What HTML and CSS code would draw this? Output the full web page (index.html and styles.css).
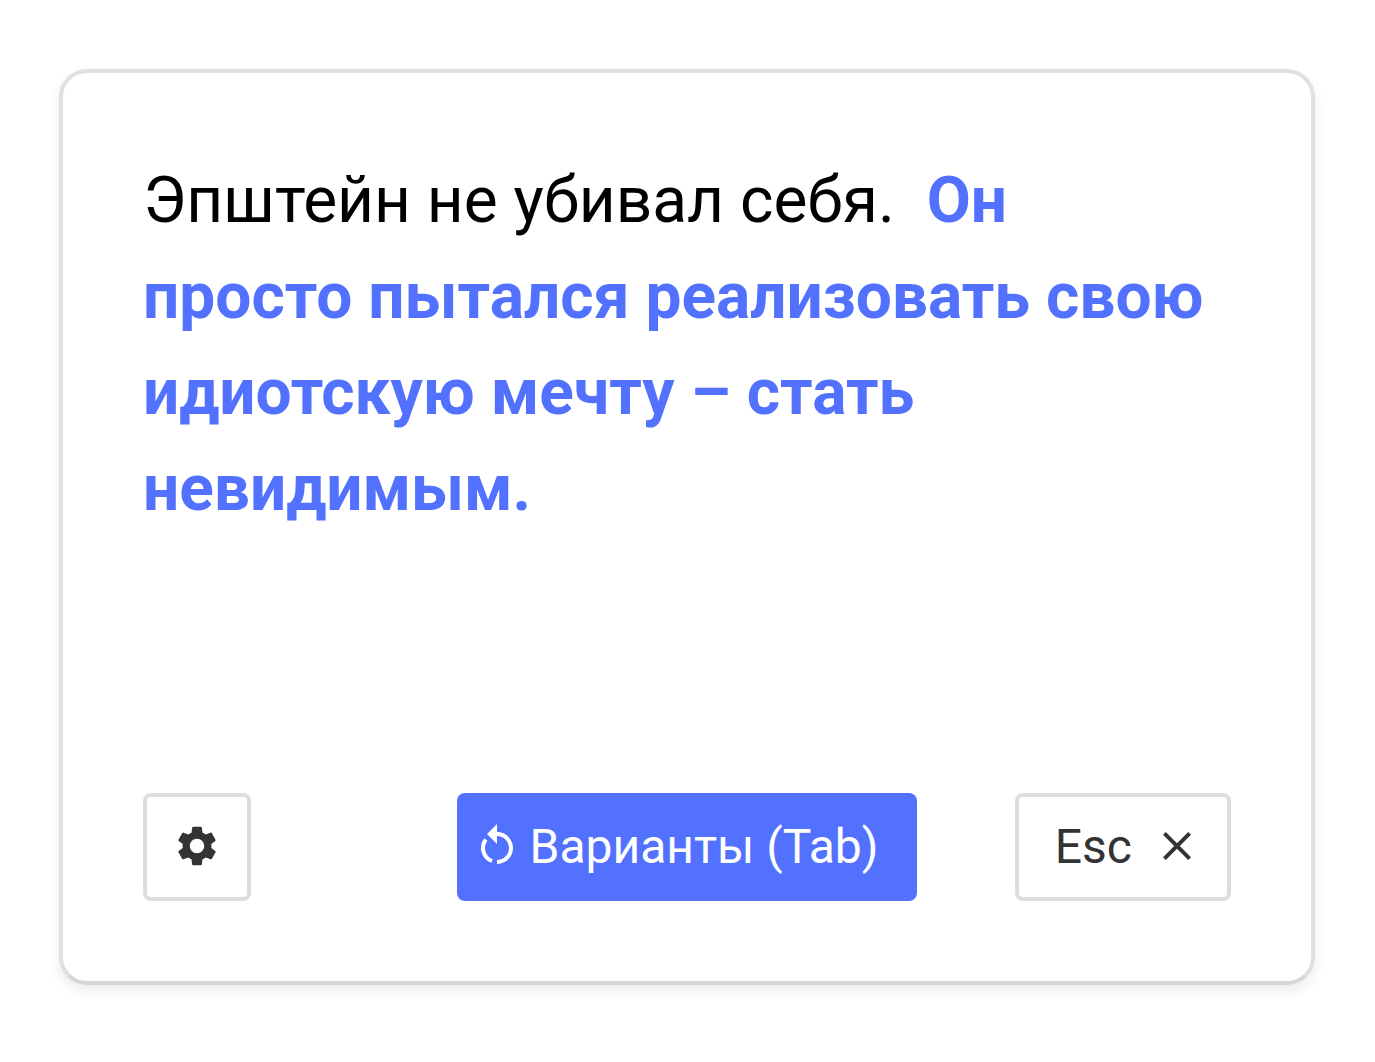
FILE: index.html
```html
<!DOCTYPE html>
<html lang="ru">
<head>
  <meta charset="UTF-8">
  <title>Эпштейн не убивал себя</title>
  <link rel="stylesheet" href="styles.css">
</head>
<body>
  <div class="card">
    <p class="phrase">Эпштейн не убивал себя. <b class="answer">Он просто пытался реализовать свою идиотскую мечту – стать невидимым.</b></p>

    <div class="actions">
      <div class="actions-left">
        <button class="button icon-button" aria-label="Настройки">
          <svg class="icon" viewBox="0 0 24 24"><path d="M19.14 12.94c.04-.3.06-.61.06-.94 0-.32-.02-.64-.07-.94l2.03-1.58c.18-.14.23-.41.12-.61l-1.92-3.32c-.12-.22-.37-.29-.59-.22l-2.39.96c-.5-.38-1.03-.7-1.62-.94l-.36-2.54c-.04-.24-.24-.41-.48-.41h-3.84c-.24 0-.43.17-.47.41l-.36 2.54c-.59.24-1.13.57-1.62.94l-2.39-.96c-.22-.08-.47 0-.59.22L2.74 8.87c-.12.21-.08.47.12.61l2.03 1.58c-.05.3-.09.63-.09.94s.02.64.07.94l-2.03 1.58c-.18.14-.23.41-.12.61l1.92 3.32c.12.22.37.29.59.22l2.39-.96c.5.38 1.03.7 1.62.94l.36 2.54c.05.24.24.41.48.41h3.84c.24 0 .44-.17.47-.41l.36-2.54c.59-.24 1.13-.56 1.62-.94l2.39.96c.22.08.47 0 .59-.22l1.92-3.32c.12-.22.07-.47-.12-.61l-2.01-1.58zM12 15.6c-1.98 0-3.6-1.62-3.6-3.6s1.62-3.6 3.6-3.6 3.6 1.62 3.6 3.6-1.62 3.6-3.6 3.6z"/></svg>
        </button>
      </div>

      <button class="button primary">
        <svg class="icon" viewBox="0 0 24 24">
          <path d="M12 5V1L7 6l5 5V7c3.31 0 6 2.69 6 6s-2.69 6-6 6v2c4.42 0 8-3.58 8-8s-3.58-8-8-8z"/>
          <path class="icon-arc" d="M6.45 8.73A7 7 0 0 0 9.5 19.54"/>
        </svg>
        <span>Варианты (Tab)</span>
      </button>

      <div class="actions-right">
        <button class="button esc">
          <span>Esc</span>
          <svg class="icon" viewBox="0 0 24 24"><path d="M19 6.41L17.59 5 12 10.59 6.41 5 5 6.41 10.59 12 5 17.59 6.41 19 12 13.41 17.59 19 19 17.59 13.41 12z"/></svg>
        </button>
      </div>
    </div>
  </div>
</body>
</html>
```

FILE: styles.css
```css
body {
  margin: 0;
  padding: 69px 60px 77px 59px;
  background-color: #fff;
  font-family: Roboto, "Noto Sans", sans-serif;
}
.card {
  display: flex;
  flex-direction: column;
  justify-content: space-between;
  box-sizing: border-box;
  height: 916px;
  padding: 80px;
  background-color: #fff;
  border: 4px solid #e0e0e0;
  border-bottom-color: #d6d6d6;
  border-radius: 28px;
  box-shadow: 0 6px 12px rgba(0,0,0,0.08);
}
.phrase {
  margin: 0;
  font-size: 64px;
  line-height: 96px;
  color: #000;
}
.answer {
  margin-left: 16px;
  font-weight: 700;
  color: #5271ff;
}
.actions {
  display: grid;
  grid-template-columns: 1fr auto 1fr;
  align-items: center;
}
.actions-right {
  display: flex;
  justify-content: flex-end;
}
.button {
  display: flex;
  align-items: center;
  box-sizing: border-box;
  height: 108px;
  padding-bottom: 2px;
  background-color: #fff;
  border: 4px solid #ddd;
  border-radius: 8px;
  font-family: inherit;
  font-size: 48px;
  color: #333;
  cursor: pointer;
}
.icon {
  display: block;
  width: 48px;
  height: 48px;
  fill: currentColor;
}
.icon-arc {
  fill: none;
  stroke: currentColor;
  stroke-width: 2;
}
.icon-button {
  justify-content: center;
  width: 108px;
  padding: 0 0 2px;
}
.primary {
  gap: 9px;
  padding: 0 39px 2px 16px;
  background-color: #5271ff;
  border: none;
  color: #fff;
}
.esc {
  gap: 21px;
  padding: 0 26px 2px 36px;
}
```
